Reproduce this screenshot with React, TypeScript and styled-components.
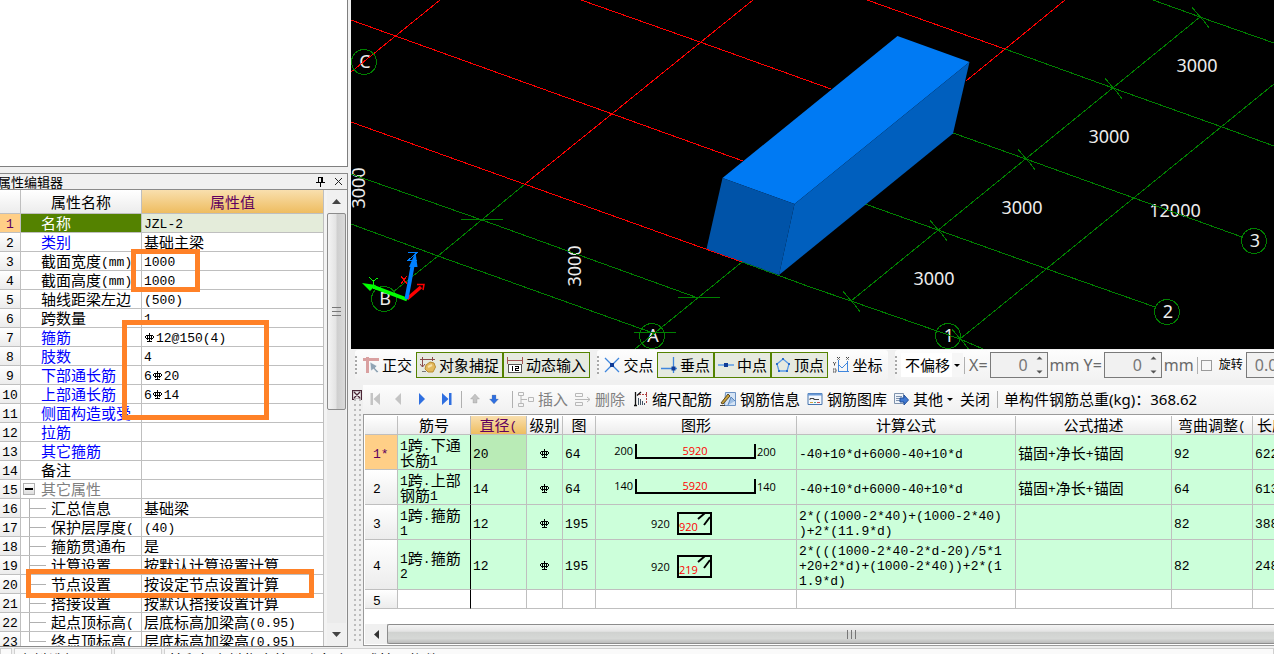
import React from 'react';
import styled, { createGlobalStyle, css } from 'styled-components';

const GREEN = '#008000';
const RED = '#ff0000';
const LINE = '#bfbfbf';

const GlobalStyle = createGlobalStyle`
  * { box-sizing: border-box; }
  html, body { margin: 0; padding: 0; overflow: hidden; }
  body {
    background: #f0f0f0;
    color: #000;
    font-family: "Noto Sans", "Noto Sans CJK SC", sans-serif;
    font-size: 15px;
    line-height: 18px;
  }
  button, input, select { font: inherit; color: inherit; }
`;

/* ---------- frame ---------- */
const Page = styled.div`
  position: relative;
  display: flex;
  flex-direction: column;
  height: 100vh;
  overflow: hidden;
`;
const Workspace = styled.div`
  display: flex;
  flex: 1;
  min-height: 0;
`;
const Sidebar = styled.aside`
  display: flex;
  flex-direction: column;
  gap: 6px;
  width: 351px;
  flex: none;
  padding-right: 3px;
`;
const ComponentPane = styled.div`
  flex: 1;
  background: #fff;
  border: solid #7f7f7f;
  border-width: 0 1px 1px 0;
`;
const Main = styled.main`
  display: flex;
  flex-direction: column;
  flex: 1;
  min-width: 0;
`;

/* ---------- mixed CJK / fixed-width text ---------- */
const Latin = styled.span`
  font-family: "Liberation Mono", monospace;
  font-size: 13px;
  line-height: 0;
  vertical-align: 1px;
`;
const Mixed = ({ text }: { text: string }) => (
  <>
    {text.split(/([\x20-\x7e]+|Φ)/).map((part, i) => {
      if (part === 'Φ') return <Rebar key={i} />;
      return /^[\x20-\x7e]+$/.test(part) ? <Latin key={i}>{part}</Latin> : part;
    })}
  </>
);
const RebarSvg = styled.svg`
  vertical-align: 0;
  margin: 0 1px;
`;
const Rebar = () => (
  <RebarSvg width="10" height="10" viewBox="0 0 10 10" fill="none" stroke="#000" role="img" aria-label="HRB400">
    <path d="M4.5 0V9M2.5 2V7M6.5 2V7M1 2.5H8M0.5 3V5M8.5 3V5M1 5.5H8M2 8.5H7" shapeRendering="crispEdges" />
  </RebarSvg>
);

/* ---------- property editor ---------- */
const Editor = styled.section`
  height: 474px;
  flex: none;
  display: flex;
  flex-direction: column;
  border: solid #8a8a8a;
  border-width: 1px 1px 1px 0;
  overflow: hidden;
`;
const EditorTitle = styled.header`
  display: flex;
  align-items: center;
  height: 16px;
  flex: none;
  border-bottom: 1px solid #8a8a8a;
  font-size: 13px;
  line-height: 14px;
`;
const TitleText = styled.h2`
  flex: 1;
  margin: 0 0 0 -2px;
  font-size: 13px;
  line-height: 14px;
  font-weight: 400;
`;
const TitleButton = styled.button`
  border: 0;
  background: none;
  padding: 0;
  width: 18px;
  height: 12px;
  display: grid;
  place-items: center;
`;
const EditorBody = styled.div`
  display: flex;
  flex: 1;
  min-height: 0;
  background: #fff;
`;
const PropViewport = styled.div`
  flex: 1;
  overflow: hidden;
`;
const PropTable = styled.table`
  width: 100%;
  table-layout: fixed;
  border-collapse: separate;
  border-spacing: 0;
  font-family: "Noto Sans CJK SC", sans-serif;
`;
const headerFill = css`
  background: linear-gradient(#ffffff, #ececec);
`;
const activeFill = css`
  background: linear-gradient(#f9dfae, #eebd60);
  color: #60005f;
`;
const PropHead = styled.th<{ $active?: boolean; $width?: number }>`
  ${headerFill}
  ${(p) => p.$active && activeFill}
  width: ${(p) => (p.$width ? `${p.$width}px` : 'auto')};
  height: 24px;
  padding: 0;
  font-weight: 400;
  border: solid ${LINE};
  border-width: 0 1px 1px 0;
`;
const PropNumber = styled.th<{ $active?: boolean }>`
  ${headerFill}
  ${(p) => p.$active && css`background: #ffcf87; color: #60005f;`}
  height: 19px;
  padding: 0;
  font-weight: 400;
  border: solid ${LINE};
  border-width: 0 1px 1px 0;
`;
const PropName = styled.td<{ $tone?: string; $indent?: number }>`
  padding: 0 0 0 ${(p) => p.$indent ?? 20}px;
  color: ${(p) => (p.$tone === 'link' ? '#0000ff' : p.$tone === 'group' ? '#808080' : p.$tone === 'active' ? '#fff' : '#000')};
  background: ${(p) => (p.$tone === 'active' ? '#548200' : '#fff')};
  border: solid ${LINE};
  border-width: 0 1px 1px 0;
  white-space: nowrap;
  overflow: hidden;
`;
const PropLabel = styled.div`
  display: flex;
  align-items: center;
  height: 18px;
`;
const PropValue = styled.td<{ $active?: boolean }>`
  padding: 0 0 0 2px;
  background: ${(p) => (p.$active ? '#e4ecda' : '#fff')};
  border: solid ${LINE};
  border-width: 0 1px 1px 0;
  white-space: nowrap;
  overflow: hidden;
`;
const Branch = styled.span<{ $last?: boolean }>`
  width: 22px;
  height: 19px;
  margin-left: 8px;
  flex: none;
  background:
    linear-gradient(#b0b0b0, #b0b0b0) 0 0 / 1px ${(p) => (p.$last ? '10px' : '19px')} no-repeat,
    linear-gradient(#b0b0b0, #b0b0b0) 0 9px / 17px 1px no-repeat;
`;
const Toggle = styled.button`
  width: 12px;
  height: 12px;
  margin: 0 6px 0 2px;
  padding: 0;
  border: 1px solid #b0b0b0;
  background: linear-gradient(#fff, #ddd);
  display: grid;
  place-items: center;
`;
const VScroll = styled.div`
  width: 23px;
  flex: none;
  display: flex;
  flex-direction: column;
  background: #f3f3f3;
  padding: 0 1px 0 3px;
`;
const ScrollButton = styled.button`
  border: 0;
  padding: 0;
  background: #f0f0f0;
  height: 23px;
  display: grid;
  place-items: center;
`;
const VTrack = styled.div`
  flex: 1;
  background: #ebebeb;
`;
const VThumb = styled.div`
  height: 197px;
  border: 1px solid #8c8c8c;
  border-radius: 2px;
  background: linear-gradient(90deg, #f4f4f4, #e4e4e4 45%, #cfcfcf 55%, #dadada);
  display: grid;
  place-items: center;
`;

type Prop = { name: string; value: string; tone?: string };
const PROPS: Prop[] = [
  { name: '名称', value: 'JZL-2', tone: 'active' },
  { name: '类别', value: '基础主梁', tone: 'link' },
  { name: '截面宽度(mm)', value: '1000' },
  { name: '截面高度(mm)', value: '1000' },
  { name: '轴线距梁左边', value: '(500)' },
  { name: '跨数量', value: '1' },
  { name: '箍筋', value: 'Φ12@150(4)', tone: 'link' },
  { name: '肢数', value: '4', tone: 'link' },
  { name: '下部通长筋', value: '6Φ20', tone: 'link' },
  { name: '上部通长筋', value: '6Φ14', tone: 'link' },
  { name: '侧面构造或受', value: '', tone: 'link' },
  { name: '拉筋', value: '', tone: 'link' },
  { name: '其它箍筋', value: '', tone: 'link' },
  { name: '备注', value: '' },
  { name: '其它属性', value: '', tone: 'group' },
  { name: '汇总信息', value: '基础梁', tone: 'child' },
  { name: '保护层厚度(', value: '(40)', tone: 'child' },
  { name: '箍筋贯通布', value: '是', tone: 'child' },
  { name: '计算设置', value: '按默认计算设置计算', tone: 'child' },
  { name: '节点设置', value: '按设定节点设置计算', tone: 'child' },
  { name: '搭接设置', value: '按默认搭接设置计算', tone: 'child' },
  { name: '起点顶标高(', value: '层底标高加梁高(0.95)', tone: 'child' },
  { name: '终点顶标高(', value: '层底标高加梁高(0.95)', tone: 'child' },
];

const PropertyEditor = () => (
  <Editor>
    <EditorTitle>
      <TitleText>属性编辑器</TitleText>
      <TitleButton aria-label="固定">
        <svg width="9" height="11" viewBox="0 0 9 11" fill="none" stroke="#000" shapeRendering="crispEdges">
          <path d="M2 1.5H7M2.5 1V6M5.5 1V6M6.5 1V6M0 6.5H9M4.5 7V11" />
        </svg>
      </TitleButton>
      <TitleButton aria-label="关闭">
        <svg width="9" height="9" viewBox="0 0 9 9" fill="none" stroke="#222">
          <path d="M1 1L8 8M8 1L1 8" />
        </svg>
      </TitleButton>
    </EditorTitle>
    <EditorBody>
      <PropViewport>
        <PropTable>
          <thead>
            <tr>
              <PropHead $width={21} />
              <PropHead $width={121}>属性名称</PropHead>
              <PropHead $active>属性值</PropHead>
            </tr>
          </thead>
          <tbody>
            {PROPS.map((p, i) => (
              <tr key={i}>
                <PropNumber $active={i === 0}><Mixed text={String(i + 1)} /></PropNumber>
                <PropName $tone={p.tone} $indent={p.tone === 'child' || p.tone === 'group' ? 0 : 20}>
                  <PropLabel>
                    {p.tone === 'child' && <Branch $last={i === PROPS.length - 1} />}
                    {p.tone === 'group' && (
                      <Toggle aria-label="折叠">
                        <svg width="8" height="2" viewBox="0 0 8 2"><path d="M0 0H8V2H0Z" fill="#000" /></svg>
                      </Toggle>
                    )}
                    <span><Mixed text={p.name} /></span>
                  </PropLabel>
                </PropName>
                <PropValue $active={i === 0}>
                  <PropLabel><span><Mixed text={p.value} /></span></PropLabel>
                </PropValue>
              </tr>
            ))}
          </tbody>
        </PropTable>
      </PropViewport>
      <VScroll>
        <ScrollButton aria-label="向上滚动">
          <svg width="9" height="5" viewBox="0 0 9 5"><path d="M0 5L4.5 0L9 5Z" fill="#444" /></svg>
        </ScrollButton>
        <VTrack>
          <VThumb>
            <svg width="9" height="10" viewBox="0 0 9 10" stroke="#777" shapeRendering="crispEdges">
              <path d="M0 0.5H9M0 4.5H9M0 8.5H9" />
            </svg>
          </VThumb>
        </VTrack>
        <ScrollButton aria-label="向下滚动">
          <svg width="9" height="5" viewBox="0 0 9 5"><path d="M0 0L4.5 5L9 0Z" fill="#444" /></svg>
        </ScrollButton>
      </VScroll>
    </EditorBody>
  </Editor>
);

/* ---------- 3D view ---------- */
const Scene = styled.svg`
  display: block;
  width: 100%;
  height: 100%;
  font-family: "Noto Sans", sans-serif;
  font-size: 18px;
  fill: #ececec;
`;
const SceneFrame = styled.div`
  flex: 1;
  min-height: 0;
  overflow: hidden;
  background: #000;
`;
const RED_LINES = [
  'M351 20L743 161', 'M351 122L742 262', 'M581 0L700 42L831 89', 'M867 0L1005 49',
  'M440 0L351 72', 'M753 0L525 184', 'M1065 0L966 81',
];
const GREEN_LINES = [
  'M865 204L938 230L1047 269L1155 307', 'M742 262L810 287L851 301L960 339L983 349',
  'M953 133L1026 159L1134 198L1242 237', 'M1005 49L1113 88L1222 127L1274 146', 'M1153 0L1200 17L1274 43',
  'M351 174L482 220L698 298', 'M351 224L438 256L653 333', 'M525 184L438 256L393 292',
  'M742 262L635 349', 'M1200 17L851 301', 'M1274 84L960 339',
  'M460 219L503 220', 'M677 297L720 298', 'M633 332L676 333',
];
const TICKS = [[1200, 17], [1113, 88], [1026, 159], [938, 230], [851, 301], [960, 339]];
const AXES: [number, number, string][] = [
  [364, 62, 'C'], [384, 299, 'B'], [652, 336, 'A'], [948, 336, '1'], [1167, 312, '2'], [1254, 241, '3'],
];
const DIMS: [number, number, string][] = [
  [1197, 72, '3000'], [1109, 143, '3000'], [1022, 214, '3000'], [934, 285, '3000'], [1175, 217, '12000'],
];
const ModelView = () => (
  <SceneFrame>
    <Scene role="img" aria-label="三维视图">
      <g transform="translate(-351 0)">
        {AXES.map(([x, y, t]) => <text key={t} x={x + 1} y={y + 6} textAnchor="middle">{t}</text>)}
        {DIMS.map(([x, y, t]) => <text key={x} x={x} y={y} textAnchor="middle">{t}</text>)}
        <text transform="translate(365 188) rotate(-90)" textAnchor="middle">3000</text>
        <text transform="translate(581 266) rotate(-90)" textAnchor="middle">3000</text>
        <g fill="none" shapeRendering="crispEdges">
          <path d={GREEN_LINES.join('')} stroke={GREEN} />
          {TICKS.map(([x, y]) => (
            <path key={x} d={`M${x - 8} ${y - 10}L${x - 5} ${y - 6}L${x + 4} ${y + 4}L${x + 9} ${y + 11}`} stroke={GREEN} />
          ))}
          <path d={RED_LINES.join('')} stroke={RED} />
          {AXES.map(([x, y, t]) => <circle key={t} cx={x} cy={y} r="12.5" stroke={GREEN} />)}
        </g>
        <path d="M722.5 178L897.5 36L969.5 62L794.5 204Z" fill="#007af3" />
        <path d="M722.5 178L794.5 204L779 275L706.5 249Z" fill="#0053a8" />
        <path d="M794.5 204L969.5 62L953 133.5L779 275Z" fill="#005fbe" />
        <path d="M707 249.5L742 262" stroke={RED} strokeDasharray="3 2" shapeRendering="crispEdges" />
        <g fill="none">
          <path d="M401 276L407 284M407 276L401 284" stroke="#f00" shapeRendering="crispEdges" />
          <path d="M407 299L421 287" stroke="#f00" strokeWidth="3.5" />
          <path d="M417 284.5H424L423 290" stroke="#f00" strokeWidth="1.5" />
          <path d="M407 299.5L374 287" stroke="#0f0" strokeWidth="3.5" />
          <path d="M362 283L376 285L370 291Z" fill="#0f0" />
          <path d="M369 277L373 281L378 278M373 281L374 289" stroke="#0f0" shapeRendering="crispEdges" />
          <path d="M406.5 299L412.5 266" stroke="#007fff" strokeWidth="4" />
          <path d="M409 267L415.5 252L417.5 267Z" fill="#007fff" />
          <path d="M408 252.5H417L408 260.5H417" stroke="#007fff" shapeRendering="crispEdges" />
        </g>
      </g>
    </Scene>
  </SceneFrame>
);

/* ---------- toolbars ---------- */
const ToolbarRow = styled.div`
  display: flex;
  align-items: center;
  height: 36px;
  flex: none;
  gap: 7px;
  padding: 0 0 4px 4px;
  white-space: nowrap;
  overflow: hidden;
`;
const Group = styled.div<{ $grow?: boolean; $gap?: number }>`
  display: flex;
  align-items: center;
  flex: ${(p) => (p.$grow ? '1 0 auto' : 'none')};
  gap: ${(p) => p.$gap ?? 0}px;
  height: 30px;
  border-radius: 3px;
  background: linear-gradient(#fdfdfd, #f2f2f2);
`;
const Grip = styled.span`
  width: 2px;
  height: 18px;
  margin: 0 2px 0 0;
  background: repeating-linear-gradient(#a8a8a8 0 2px, transparent 2px 4px);
`;
const SnapButton = styled.button<{ $width: number; $on?: boolean }>`
  display: flex;
  align-items: center;
  justify-content: center;
  gap: 3px;
  width: ${(p) => p.$width}px;
  height: 26px;
  padding: 0;
  border: 1px solid ${(p) => (p.$on ? '#548200' : 'transparent')};
  background: ${(p) => (p.$on ? '#e6eae0' : 'none')};
`;
const OffsetSelect = styled.select`
  width: 62px;
  height: 24px;
  appearance: none;
  border: 0;
  padding: 0 12px 0 4px;
  background:
    linear-gradient(#f6f6f6, #f6f6f6) right / 11px 100% no-repeat,
    #fff;
`;
const SelectWrap = styled.span`
  display: flex;
  align-items: center;
`;
const SelectArrow = styled.svg`
  margin-left: -9px;
  pointer-events: none;
`;
const Divider = styled.span<{ $gap?: number }>`
  width: 1px;
  height: 17px;
  flex: none;
  background: #b0b0b0;
  margin: 0 ${(p) => p.$gap ?? 2}px;
`;
const FieldLabel = styled.label`
  color: #6a6a6a;
  font-size: 16px;
`;
const FieldBox = styled.span<{ $width: number }>`
  display: flex;
  align-items: center;
  width: ${(p) => p.$width}px;
  height: 26px;
  padding-right: 4px;
  border: 1px solid #7a7a7a;
  background: #f1f1f1;
`;
const NumberInput = styled.input<{ $left?: boolean }>`
  flex: 1;
  min-width: 0;
  width: 0;
  border: 0;
  padding: 0 8px;
  background: none;
  color: #777;
  text-align: ${(p) => (p.$left ? 'left' : 'right')};
  font-size: 16px;
`;
const Check = styled.input`
  appearance: none;
  width: 11px;
  height: 11px;
  margin: 0 5px 0 0;
  border: 1px solid #9a9a9a;
  background: #f7f7f7;
`;
const CheckLabel = styled.label`
  font-size: 12px;
  width: 25px;
`;
const Spinner = () => (
  <svg width="7" height="18" viewBox="0 0 7 18" fill="#555" aria-hidden="true">
    <path d="M0.5 3.5L3.5 0.5L6.5 3.5ZM0.5 14.5L3.5 17.5L6.5 14.5Z" />
  </svg>
);
const Caret = () => (
  <svg width="6" height="3" viewBox="0 0 6 3" aria-hidden="true"><path d="M0 0H6L3 3Z" fill="#000" /></svg>
);

const icon = { width: 16, height: 16, viewBox: '0 0 16 16', fill: 'none', 'aria-hidden': true } as const;
const OrthoIcon = () => (
  <svg {...icon}>
    <path d="M0 2.5H16M4.5 0V16" stroke="#d9a0a0" strokeWidth="3" />
    <path d="M7 5L8 14L10.5 12L14 16L15.5 14.5L12 11L14 9Z" fill="#8fa3b3" stroke="#fff" strokeWidth="0.5" />
  </svg>
);
const SnapIcon = () => (
  <svg {...icon}>
    <path d="M2.5 0V10M0 7L2.5 10L5 7M12.5 0V4M0 2.5H15" stroke="#8a4a4a" />
    <path d="M6 8L10 5L14 6L15.5 10L13 15H8L5 12Z" fill="#e3b95b" stroke="#b98c32" />
    <path d="M8 10L12 8" stroke="#f7e2a8" strokeWidth="2" />
    <path d="M2 14.5H6" stroke="#777" />
  </svg>
);
const DynamicIcon = () => (
  <svg {...icon} shapeRendering="crispEdges">
    <path d="M0 3.5H16M0.5 0V7M15.5 0V7" stroke="#a35555" />
    <path d="M1.5 7.5H14.5V15.5H1.5Z" stroke="#555" fill="#fff" />
    <path d="M5.5 9V14M8 9.5H12M11.5 9V12M8.5 11V14M8 11.5H12M8 13.5H12" stroke="#000" />
  </svg>
);
const CrossIcon = () => (
  <svg {...icon}>
    <path d="M1 1L15 15M15 1L1 15" stroke="#3f86dd" strokeWidth="1.3" />
    <path d="M6 6H10V10H6Z" fill="#103c96" />
  </svg>
);
const PerpIcon = () => (
  <svg {...icon}>
    <path d="M0 11.5H16M12.5 0V16" stroke="#3f86dd" strokeWidth="1.3" />
    <path d="M10.5 9.5H14.5V13.5H10.5Z" fill="#103c96" />
  </svg>
);
const MidIcon = () => (
  <svg {...icon}>
    <path d="M0 8H16" stroke="#5a9be8" strokeWidth="1.5" />
    <path d="M6 6H10V10H6Z" fill="#103c96" />
  </svg>
);
const VertexIcon = () => (
  <svg {...icon}>
    <path d="M8 2L14 7L12 14H4L2 7Z" stroke="#5a9be8" strokeWidth="1.3" />
    <path d="M7 1H9V3H7ZM13 6H15V8H13ZM11 13H13V15H11ZM3 13H5V15H3ZM1 6H3V8H1Z" fill="#2a6cc8" />
  </svg>
);
const CoordIcon = () => (
  <svg {...icon}>
    <path d="M5.5 3V15M5 14.5H16M5 7L9 11L14 6M14.5 4V15" stroke="#3f86dd" />
    <path d="M4 0L7 3M7 0L4 3M13 0L16 3M16 0L13 3M0 5L1.5 7L3 5M1.5 7V9M0 12H3V15H0Z" stroke="#444" strokeDasharray="1.5 0.5" />
  </svg>
);

const SnapToolbar = () => (
  <ToolbarRow>
    <Group>
      <Grip />
      <SnapButton $width={57}><OrthoIcon />正交</SnapButton>
      <SnapButton $width={87} $on aria-pressed="true"><SnapIcon />对象捕捉</SnapButton>
      <SnapButton $width={87} $on aria-pressed="true"><DynamicIcon />动态输入</SnapButton>
    </Group>
    <Group>
      <Grip />
      <SnapButton $width={56}><CrossIcon />交点</SnapButton>
      <SnapButton $width={57} $on aria-pressed="true"><PerpIcon />垂点</SnapButton>
      <SnapButton $width={57} $on aria-pressed="true"><MidIcon />中点</SnapButton>
      <SnapButton $width={57} $on aria-pressed="true"><VertexIcon />顶点</SnapButton>
      <SnapButton $width={60}><CoordIcon />坐标</SnapButton>
    </Group>
    <Group $grow $gap={2}>
      <Grip />
      <SelectWrap>
        <OffsetSelect aria-label="偏移方式"><option>不偏移</option></OffsetSelect>
        <SelectArrow width="6" height="3" viewBox="0 0 6 3"><path d="M0 0H6L3 3Z" fill="#000" /></SelectArrow>
      </SelectWrap>
      <Divider />
      <FieldLabel htmlFor="offset-x">X=</FieldLabel>
      <FieldBox $width={58}><NumberInput id="offset-x" defaultValue="0" /><Spinner /></FieldBox>
      <FieldLabel htmlFor="offset-y">mm Y=</FieldLabel>
      <FieldBox $width={58}><NumberInput id="offset-y" defaultValue="0" /><Spinner /></FieldBox>
      <FieldLabel as="span">mm</FieldLabel>
      <Divider $gap={1} />
      <Check type="checkbox" id="rotate" />
      <CheckLabel htmlFor="rotate">旋转</CheckLabel>
      <FieldBox $width={58}><NumberInput $left aria-label="旋转角度" defaultValue="0.000" /></FieldBox>
    </Group>
  </ToolbarRow>
);

/* ---------- rebar panel ---------- */
const RebarPanel = styled.section`
  display: flex;
  height: 262px;
  flex: none;
`;
const PanelGrip = styled.div`
  width: 12px;
  flex: none;
  display: flex;
  flex-direction: column;
  gap: 4px;
  align-items: center;
`;
const PanelClose = styled.button`
  border: 0;
  background: none;
  padding: 0;
  width: 10px;
  height: 10px;
  display: block;
`;
const GripDots = styled.div`
  flex: 1;
  width: 7px;
  margin-bottom: 5px;
  background: linear-gradient(#f0f0f0, #f0f0f0) 2px 0 / 3px 100% no-repeat,
    repeating-linear-gradient(#bdbdbd 0 2px, #f0f0f0 2px 5px);
`;
const PanelBody = styled.div`
  flex: 1;
  min-width: 0;
  display: flex;
  flex-direction: column;
  padding-bottom: 1px;
`;
const RebarToolbar = styled.div`
  display: flex;
  align-items: center;
  height: 29px;
  flex: none;
  padding-left: 3px;
  padding-bottom: 1px;
  white-space: nowrap;
  background: linear-gradient(#fdfdfd, #f0f0f0);
`;
const ToolButton = styled.button<{ $width: number; $disabled?: boolean }>`
  display: flex;
  align-items: center;
  gap: 4px;
  width: ${(p) => p.$width}px;
  flex: none;
  padding: 0;
  border: 0;
  background: none;
  color: ${(p) => (p.$disabled ? '#808080' : '#000')};
`;
const Total = styled.output`
  margin-left: 6px;
`;
const GridFrame = styled.div`
  flex: 1;
  min-height: 0;
  display: flex;
  flex-direction: column;
  padding: 1px 0 1px 1px;
  border: solid #9a9a9a;
  border-width: 1px 0 1px 1px;
  background: #fff;
  overflow: hidden;
`;
const GridViewport = styled.div`
  flex: 1;
  overflow: hidden;
`;
const Grid = styled.table`
  table-layout: fixed;
  width: 958px;
  border-collapse: separate;
  border-spacing: 0;
  font-family: "Noto Sans CJK SC", sans-serif;
`;
const GridHead = styled.th<{ $width: number; $active?: boolean }>`
  ${headerFill}
  ${(p) => p.$active && activeFill}
  width: ${(p) => p.$width}px;
  height: 19px;
  padding: 0;
  font-weight: 400;
  white-space: nowrap;
  overflow: hidden;
  border: solid ${LINE};
  border-width: 0 1px 1px 0;
`;
const HeadLabel = styled.div`
  height: 18px;
  line-height: 18px;
`;
const GridNumber = styled.th<{ $active?: boolean }>`
  ${headerFill}
  ${(p) => p.$active && css`background: #ffcf87; color: #60005f;`}
  padding: 0 8px;
  text-align: left;
  font-weight: 400;
  line-height: 15px;
  border: solid ${LINE};
  border-width: 0 1px 1px 0;
`;
const GridRow = styled.tr<{ $height: number }>`
  height: ${(p) => p.$height}px;
`;
const Cell = styled.td<{ $blank?: boolean; $active?: boolean; $edge?: boolean; $center?: boolean; $tight?: boolean }>`
  padding: 0 ${(p) => (p.$tight ? 0 : p.$center ? 2 : 9)}px 0 2px;
  background: ${(p) => (p.$blank ? '#fff' : p.$active ? '#b9ebb6' : '#ccffda')};
  border: solid ${LINE};
  border-width: 0 1px 1px 0;
  border-right-color: ${(p) => (p.$edge ? '#000' : LINE)};
  text-align: ${(p) => (p.$center ? 'center' : 'left')};
  line-height: 15px;
  line-break: anywhere;
  overflow: hidden;
`;
const Shape = styled.svg`
  display: block;
  margin: 0 auto;
  font-family: "Open Sans", "Noto Sans", sans-serif;
  font-size: 11px;
`;
const HScroll = styled.div`
  display: flex;
  height: 20px;
  flex: none;
  background: #ececec;
`;
const HButton = styled(ScrollButton)`
  width: 22px;
  height: 20px;
`;
const HThumb = styled.div`
  flex: 1;
  padding-left: 42px;
  border: solid #8c8c8c;
  border-width: 1px 0 1px 1px;
  border-radius: 2px 0 0 2px;
  background: linear-gradient(#f4f4f4, #e4e4e4 35%, #d0d2d0 40%, #d6d8d6 75%, #bbbbbb);
  display: grid;
  place-items: center;
`;

const BarShape = ({ hook }: { hook: string }) => (
  <Shape width="190" height="28" viewBox="0 0 190 28">
    <path d="M35 6V20H154V6" fill="none" stroke="#000" strokeWidth="2" />
    <text x="32" y="17" textAnchor="end">{hook}</text>
    <text x="94" y="17" textAnchor="middle" fill="#f00">5920</text>
    <text x="156" y="18">{hook}</text>
  </Shape>
);
const StirrupShape = ({ inner }: { inner: string }) => (
  <Shape width="190" height="28" viewBox="0 0 190 28">
    <path d="M77 5H110V26H77ZM97 11L104 5M103 17L109 9" fill="none" stroke="#000" strokeWidth="2" />
    <text x="50" y="20">920</text>
    <text x="78" y="23" fill="#f00">{inner}</text>
  </Shape>
);

const FirstIcon = ({ flip = false, color }: { flip?: boolean; color: string }) => (
  <svg width="12" height="14" viewBox="0 0 12 14" fill={color} transform={flip ? 'scale(-1 1)' : undefined} aria-hidden="true">
    <path d="M0.5 1H3V13H0.5ZM3.5 7L10 1V13Z" />
  </svg>
);
const StepIcon = ({ flip = false, color }: { flip?: boolean; color: string }) => (
  <svg width="12" height="14" viewBox="0 0 12 14" fill={color} transform={flip ? 'scale(-1 1)' : undefined} aria-hidden="true">
    <path d="M4 7L10 1V13Z" />
  </svg>
);
const ArrowIcon = ({ flip = false, color }: { flip?: boolean; color: string }) => (
  <svg width="12" height="12" viewBox="0 0 12 12" fill={color} stroke="#8884" transform={flip ? 'scale(1 -1)' : undefined} aria-hidden="true">
    <path d="M6 1L10.5 6H8V10H4V6H1.5Z" />
  </svg>
);
const InsertIcon = () => (
  <svg {...icon} stroke="#b8b8b8">
    <path d="M0.5 1.5H5.5V4.5H0.5ZM0.5 12.5H5.5V15.5H0.5ZM3 5V12M3 8.5H9M10.5 6.5H15.5V10.5H10.5Z" />
  </svg>
);
const DeleteIcon = () => (
  <svg {...icon} stroke="#b8b8b8">
    <path d="M0.5 2.5H7.5V5.5H0.5ZM0.5 11.5H7.5V14.5H0.5ZM0 8.5H15M12 6L15 8.5L12 11" />
  </svg>
);
const ScaleIcon = () => (
  <svg width="14" height="16" viewBox="0 0 14 16" fill="none" aria-hidden="true">
    <path d="M1.5 1V14M0 14.5H3M3 4.5L7 1" stroke="#111" strokeWidth="1.3" />
    <path d="M4.5 7V14M6.5 8V14M8.5 10V14M10.5 12V14" stroke="#456" shapeRendering="crispEdges" />
    <path d="M5 3.5H13M12.5 1V13" stroke="#b04040" strokeDasharray="2 1" />
  </svg>
);
const InfoIcon = () => (
  <svg {...icon}>
    <path d="M5.5 1.5H15.5V14.5H4.5Z" fill="#d5e4f5" stroke="#6d93c4" />
    <path d="M8 14L11 6L15 10" stroke="#5b86bd" fill="#9fbfe4" />
    <path d="M1 12L8 3L10 5L3 13Z" fill="#c9a13c" stroke="#5b4a22" />
    <path d="M0 14.5H5" stroke="#444" />
  </svg>
);
const LibraryIcon = () => (
  <svg {...icon}>
    <path d="M1 2.5H15V13.5H1Z" fill="#f4f8fd" stroke="#4674ae" />
    <path d="M1 3.5H15" stroke="#6b9ad6" strokeWidth="2" />
    <path d="M3 9V7.5H7V9M7 8.5H12" stroke="#444" />
    <path d="M3 11.5H6" stroke="#d8a23c" /><path d="M7 11.5H9" stroke="#5a9" /><path d="M10 11.5H13" stroke="#c55" />
  </svg>
);
const OtherIcon = () => (
  <svg {...icon}>
    <path d="M1.5 2.5H10.5V12.5H1.5Z" fill="#eef3fa" stroke="#7f93ad" />
    <path d="M3 5.5H9M3 7.5H7M3 9.5H7" stroke="#7f93ad" />
    <path d="M7 7H11V4L15.5 9L11 14V11H7Z" fill="#3f78d0" stroke="#23509c" />
  </svg>
);

const COLUMNS: [string, number][] = [
  ['', 33], ['筋号', 73], ['直径(', 56], ['级别', 36], ['图', 33], ['图形', 201],
  ['计算公式', 219], ['公式描述', 156], ['弯曲调整(', 81], ['长度(mm)', 70],
];
type Bar = { no: string; name: string; dia: string; fig: string; shape: React.ReactNode; formula: string; note: string; bend: string; len: string; height: number };
const BARS: Bar[] = [
  { no: '1*', name: '1跨.下通长筋1', dia: '20', fig: '64', shape: <BarShape hook="200" />, formula: '-40+10*d+6000-40+10*d', note: '锚固+净长+锚固', bend: '92', len: '6228', height: 35 },
  { no: '2', name: '1跨.上部钢筋1', dia: '14', fig: '64', shape: <BarShape hook="140" />, formula: '-40+10*d+6000-40+10*d', note: '锚固+净长+锚固', bend: '64', len: '6136', height: 35 },
  { no: '3', name: '1跨.箍筋1', dia: '12', fig: '195', shape: <StirrupShape inner="920" />, formula: '2*((1000-2*40)+(1000-2*40))+2*(11.9*d)', note: '', bend: '82', len: '3884', height: 35 },
  { no: '4', name: '1跨.箍筋2', dia: '12', fig: '195', shape: <StirrupShape inner="219" />, formula: '2*(((1000-2*40-2*d-20)/5*1+20+2*d)+(1000-2*40))+2*(11.9*d)', note: '', bend: '82', len: '2482', height: 50 },
];

const RebarEditor = () => (
  <RebarPanel>
    <PanelGrip>
      <PanelClose aria-label="关闭面板">
        <svg width="10" height="10" viewBox="0 0 10 10" fill="none" stroke="#4a2535">
          <path d="M0.5 0.5H9.5V9.5H0.5ZM2 2L8 8M8 2L2 8" strokeWidth="1.3" />
        </svg>
      </PanelClose>
      <GripDots />
    </PanelGrip>
    <PanelBody>
      <RebarToolbar>
        <ToolButton $width={25} aria-label="第一条"><span /><FirstIcon color="#c4c4c4" /></ToolButton>
        <ToolButton $width={26} aria-label="上一条"><StepIcon color="#c4c4c4" /></ToolButton>
        <ToolButton $width={23} aria-label="下一条"><StepIcon flip color="#2f6fe0" /></ToolButton>
        <ToolButton $width={18} aria-label="最后一条"><FirstIcon flip color="#2f6fe0" /></ToolButton>
        <Divider $gap={3} />
        <ToolButton $width={23} aria-label="上移"><span /><ArrowIcon color="#c4c4c4" /></ToolButton>
        <ToolButton $width={19} aria-label="下移"><ArrowIcon flip color="#2f6fe0" /></ToolButton>
        <Divider $gap={5} />
        <ToolButton $width={57} $disabled><InsertIcon />插入</ToolButton>
        <ToolButton $width={59} $disabled><DeleteIcon />删除</ToolButton>
        <ToolButton $width={86}><ScaleIcon />缩尺配筋</ToolButton>
        <ToolButton $width={87}><InfoIcon />钢筋信息</ToolButton>
        <ToolButton $width={86}><LibraryIcon />钢筋图库</ToolButton>
        <ToolButton $width={67}><OtherIcon />其他<Caret /></ToolButton>
        <ToolButton $width={37}>关闭</ToolButton>
        <Divider $gap={0} />
        <Total>单构件钢筋总重(kg)：368.62</Total>
      </RebarToolbar>
      <GridFrame>
        <GridViewport>
          <Grid>
            <thead>
              <tr>
                {COLUMNS.map(([label, width], i) => (
                  <GridHead key={i} $width={width} $active={i === 2}>
                    <HeadLabel><Mixed text={label} /></HeadLabel>
                  </GridHead>
                ))}
              </tr>
            </thead>
            <tbody>
              {BARS.map((b, i) => (
                <GridRow key={b.no} $height={b.height}>
                  <GridNumber $active={i === 0}><Mixed text={b.no} /></GridNumber>
                  <Cell $edge><Mixed text={b.name} /></Cell>
                  <Cell $active={i === 0}><Mixed text={b.dia} /></Cell>
                  <Cell $center><Rebar /></Cell>
                  <Cell $tight><Mixed text={b.fig} /></Cell>
                  <Cell $center>{b.shape}</Cell>
                  <Cell><Mixed text={b.formula} /></Cell>
                  <Cell><Mixed text={b.note} /></Cell>
                  <Cell><Mixed text={b.bend} /></Cell>
                  <Cell><Mixed text={b.len} /></Cell>
                </GridRow>
              ))}
              <GridRow $height={19}>
                <GridNumber><Mixed text="5" /></GridNumber>
                {COLUMNS.slice(1).map((_, i) => <Cell key={i} $blank $edge={i === 0} />)}
              </GridRow>
            </tbody>
          </Grid>
        </GridViewport>
        <HScroll>
          <HButton aria-label="向左滚动">
            <svg width="5" height="9" viewBox="0 0 5 9"><path d="M5 0L0 4.5L5 9Z" fill="#333" /></svg>
          </HButton>
          <HThumb>
            <svg width="10" height="9" viewBox="0 0 10 9" stroke="#777" shapeRendering="crispEdges">
              <path d="M0.5 0V9M4.5 0V9M8.5 0V9" />
            </svg>
          </HThumb>
        </HScroll>
      </GridFrame>
    </PanelBody>
  </RebarPanel>
);

/* ---------- status bar and highlight frames ---------- */
const StatusBar = styled.footer`
  display: flex;
  gap: 2px;
  height: 7px;
  flex: none;
  padding-top: 1px;
  overflow: hidden;
  font-family: "Noto Sans CJK SC", sans-serif;
`;
const StatusCell = styled.div<{ $width?: number }>`
  width: ${(p) => (p.$width ? `${p.$width}px` : 'auto')};
  flex: ${(p) => (p.$width ? 'none' : '1')};
  height: 24px;
  padding: 2px 0 0 4px;
  border: 1px solid #d0d0d0;
  background: #fafafa;
  white-space: nowrap;
  overflow: hidden;
`;
const Highlight = styled.div<{ $left: number; $bottom: number; $width: number; $height: number }>`
  position: absolute;
  left: ${(p) => p.$left}px;
  bottom: ${(p) => p.$bottom}px;
  width: ${(p) => p.$width}px;
  height: ${(p) => p.$height}px;
  border: 5px solid #ff8127;
  pointer-events: none;
`;

export default function App() {
  return (
    <Page>
      <GlobalStyle />
      <Workspace>
        <Sidebar>
          <ComponentPane />
          <PropertyEditor />
        </Sidebar>
        <Main>
          <ModelView />
          <SnapToolbar />
          <RebarEditor />
        </Main>
      </Workspace>
      <StatusBar>
        <StatusCell $width={12} />
        <StatusCell $width={98}>左键选择</StatusCell>
        <StatusCell $width={48} />
        <StatusCell>按鼠标左键指定第一个角点，或拾取构件图元</StatusCell>
      </StatusBar>
      <Highlight $left={131} $bottom={362} $width={69} $height={43} />
      <Highlight $left={122} $bottom={234} $width={147} $height={100} />
      <Highlight $left={26} $bottom={56} $width={288} $height={29} />
    </Page>
  );
}
